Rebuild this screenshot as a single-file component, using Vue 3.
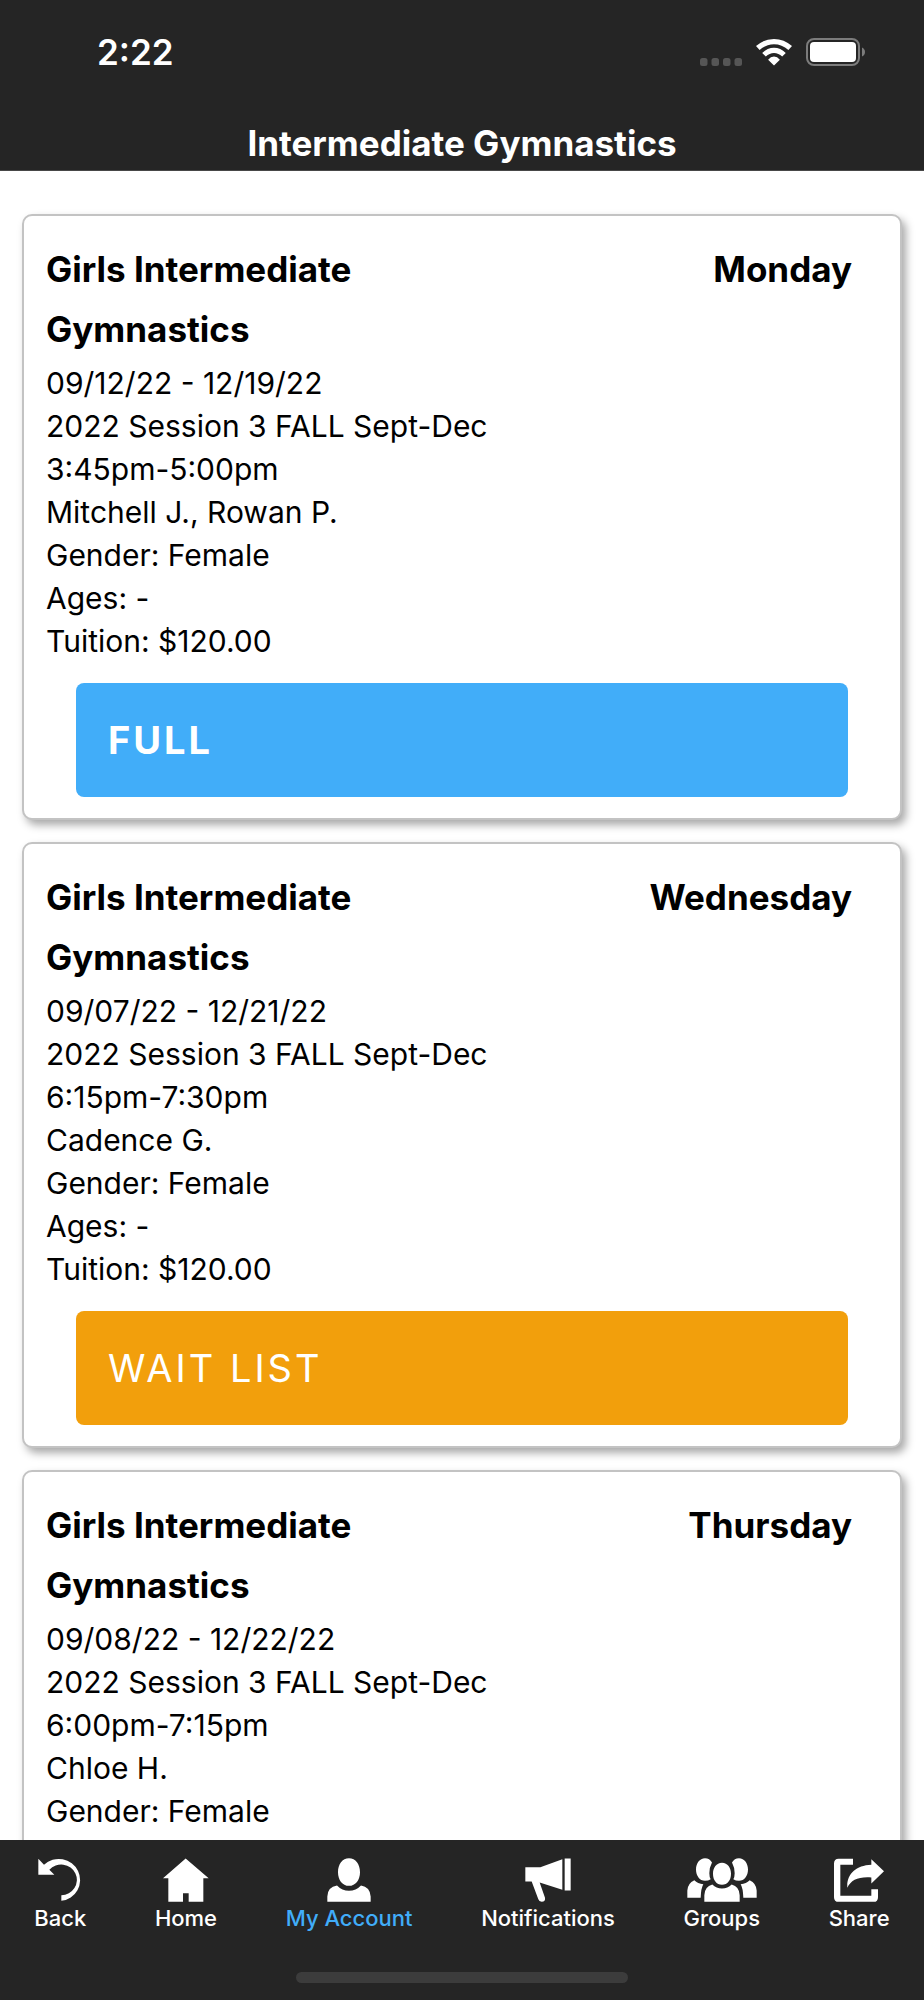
<script setup>
const classes = [
  {
    name: 'Girls Intermediate Gymnastics',
    day: 'Monday',
    details: [
      '09/12/22 - 12/19/22',
      '2022 Session 3 FALL Sept-Dec',
      '3:45pm-5:00pm',
      'Mitchell J., Rowan P.',
      'Gender: Female',
      'Ages: -',
      'Tuition: $120.00',
    ],
    status: 'FULL',
    kind: 'full',
  },
  {
    name: 'Girls Intermediate Gymnastics',
    day: 'Wednesday',
    details: [
      '09/07/22 - 12/21/22',
      '2022 Session 3 FALL Sept-Dec',
      '6:15pm-7:30pm',
      'Cadence G.',
      'Gender: Female',
      'Ages: -',
      'Tuition: $120.00',
    ],
    status: 'WAIT LIST',
    kind: 'wait',
  },
  {
    name: 'Girls Intermediate Gymnastics',
    day: 'Thursday',
    details: [
      '09/08/22 - 12/22/22',
      '2022 Session 3 FALL Sept-Dec',
      '6:00pm-7:15pm',
      'Chloe H.',
      'Gender: Female',
    ],
  },
]

const tabs = [
  {
    label: 'Back',
    width: 44,
    box: '116 115 132 131',
    path: 'M117 117L134 135A64 63 0 1 1 186 243V226A47 46 0 1 0 150 150L165 165H117Z',
  },
  {
    label: 'Home',
    width: 46,
    box: '490 115 138 131',
    path: 'M558 116L627 175H611V246H567V220H550V246H506V175H490Z',
  },
  {
    label: 'My Account',
    width: 44,
    active: true,
    box: '137 115 132 131',
    path: 'M203 115C223 115 236 133 236 157C236 180 223 198 203 198C183 198 170 180 170 157C170 133 183 115 203 115ZM138 246V230Q139 201 167 197Q182 213 203 213Q224 213 239 197Q266 201 268 230V246Z',
  },
  {
    label: 'Notifications',
    width: 46,
    box: '731 115 138 131',
    path: 'M732 142H777L843 118V210L775 188L791 234Q793 246 781 246Q774 246 771 238L751 185H732ZM850 116H868V212H850Z',
  },
  {
    label: 'Groups',
    width: 70,
    box: '200 115 210 131',
    path: 'M305 129C322 129 332 144 332 162C332 181 322 195 305 195C288 195 278 181 278 162C278 144 288 129 305 129ZM252 246V226Q253 200 276 194Q288 206 305 206Q322 206 334 194Q357 200 358 226V246ZM254 115Q268 115 275 128Q267 143 267 160Q267 171 271 178Q264 183 254 183C238 183 227 168 227 149C227 130 238 115 254 115ZM356 115Q342 115 335 128Q343 143 343 160Q343 171 339 178Q346 183 356 183C372 183 383 168 383 149C383 130 372 115 356 115ZM201 234V212Q202 190 222 181Q232 191 249 193Q242 204 241 234ZM409 234V212Q408 190 388 181Q378 191 361 193Q368 204 369 234Z',
  },
  {
    label: 'Share',
    width: 50,
    box: '641 115 150 131',
    path: 'M698 117H655Q641 117 641 131V232Q641 246 655 246H760Q773 246 773 232V208H753V228H660V135H698ZM753 118L791 154L753 191V173C715 170 692 180 681 204C678 165 705 137 753 135Z',
  },
]
</script>

<template>
  <div class="app">
    <header class="top">
      <div class="status">
        <span class="time">2:22</span>
        <div class="indicators">
          <svg class="dots" width="42" height="8" viewBox="0 0 42 8" aria-hidden="true">
            <rect v-for="x in [0, 11.5, 23, 34.5]" :key="x" :x="x" width="7.5" height="8" rx="2.5" fill="#565656" />
          </svg>
          <svg width="36" height="28" viewBox="881 115 110 84" fill="#fff" aria-hidden="true">
            <path d="M881 139Q905 117 936 117Q967 117 991 139L980 151Q960 133 936 133Q912 133 892 151ZM900 160Q916 144 936 144Q956 144 972 160L961 171Q950 160 936 160Q922 160 911 171ZM918 181Q926 171 936 171Q946 171 954 181L936 198Z" />
          </svg>
          <svg width="60" height="28" viewBox="0 0 60 28" aria-hidden="true">
            <rect x="1" y="1" width="52" height="26" rx="7" fill="none" stroke="#7c7c7c" stroke-width="2" />
            <rect x="4" y="4" width="46" height="20" rx="4" fill="#fff" />
            <path d="M56 9.500Q59 11 59 14Q59 17 56 18.500Z" fill="#7c7c7c" />
          </svg>
        </div>
      </div>
      <h1 class="title">Intermediate Gymnastics</h1>
    </header>

    <main class="list">
      <article v-for="item in classes" :key="item.day" class="card">
        <div class="head">
          <h2 class="name">{{ item.name }}</h2>
          <span class="day">{{ item.day }}</span>
        </div>
        <p v-for="line in item.details" :key="line" class="line">{{ line }}</p>
        <button v-if="item.status" type="button" class="action" :class="item.kind">{{ item.status }}</button>
      </article>
    </main>

    <footer class="bottom">
      <nav class="tabs">
        <a v-for="tab in tabs" :key="tab.label" href="#" class="tab" :class="{ active: tab.active }">
          <svg :width="tab.width" height="44" :viewBox="tab.box" fill="#fff" aria-hidden="true">
            <path :d="tab.path" />
          </svg>
          <span>{{ tab.label }}</span>
        </a>
      </nav>
      <div class="grip"></div>
    </footer>
  </div>
</template>

<style>
body {
  margin: 0;
  background: #fff;
}
</style>

<style scoped>
.app {
  display: flex;
  flex-direction: column;
  height: 100vh;
  overflow: hidden;
  font-family: Inter, "Liberation Sans", sans-serif;
  color: #000;
  background: #fff;
}
.top {
  flex: none;
  color: #fff;
  background: #252525;
  border-bottom: 1px solid #484848;
}
.status {
  display: flex;
  align-items: center;
  justify-content: space-between;
  height: 52px;
  padding: 26px 58px 0 97px;
}
.time {
  font-size: 35px;
  font-weight: 600;
}
.indicators {
  display: flex;
  align-items: flex-end;
  gap: 14px;
}
.title {
  margin: 0;
  padding: 43px 24px 5px;
  font-size: 35px;
  line-height: 44px;
  font-weight: 700;
  text-align: center;
}
.list {
  flex: 1;
  min-height: 0;
  display: flex;
  flex-direction: column;
  gap: 22px;
  padding: 43px 22px;
  overflow-y: auto;
  scrollbar-width: none;
}
.card {
  box-sizing: border-box;
  flex: none;
  min-height: 606px;
  padding: 23px 22px 21px;
  border: 2px solid #c3c3c3;
  border-radius: 10px;
  background: #fff;
  box-shadow: 4px 5px 9px rgba(0, 0, 0, 0.34);
}
.head {
  display: flex;
  align-items: flex-start;
  justify-content: space-between;
  padding-right: 26px;
  margin-bottom: 3px;
  font-size: 35px;
  line-height: 60px;
  font-weight: 700;
}
.name {
  width: 50%;
  margin: 0;
  font: inherit;
}
.line {
  margin: 0;
  font-size: 30px;
  line-height: 43px;
}
.action {
  display: block;
  width: calc(100% - 60px);
  height: 114px;
  margin: 20px 30px 0;
  padding: 0 32px;
  border: 0;
  border-radius: 8px;
  color: #fff;
  font-family: inherit;
  font-size: 38px;
  letter-spacing: 3px;
  text-align: left;
}
.full {
  background: #41adf9;
  font-weight: 700;
}
.wait {
  background: #f29f0c;
  font-weight: 400;
}
.bottom {
  flex: none;
  color: #fff;
  background: #252525;
}
.tabs {
  display: flex;
  justify-content: space-around;
  padding-top: 18px;
}
.tab {
  display: flex;
  flex-direction: column;
  align-items: center;
  gap: 3px;
  color: #fff;
  font-size: 22px;
  line-height: 26px;
  font-weight: 500;
  text-decoration: none;
}
.tab.active {
  color: #41adf9;
}
.grip {
  width: 36%;
  height: 11px;
  margin: 41px auto 0;
  border-radius: 6px;
  background: #3c3c3c;
}
.bottom::after {
  content: "";
  display: block;
  height: 17px;
}
</style>
